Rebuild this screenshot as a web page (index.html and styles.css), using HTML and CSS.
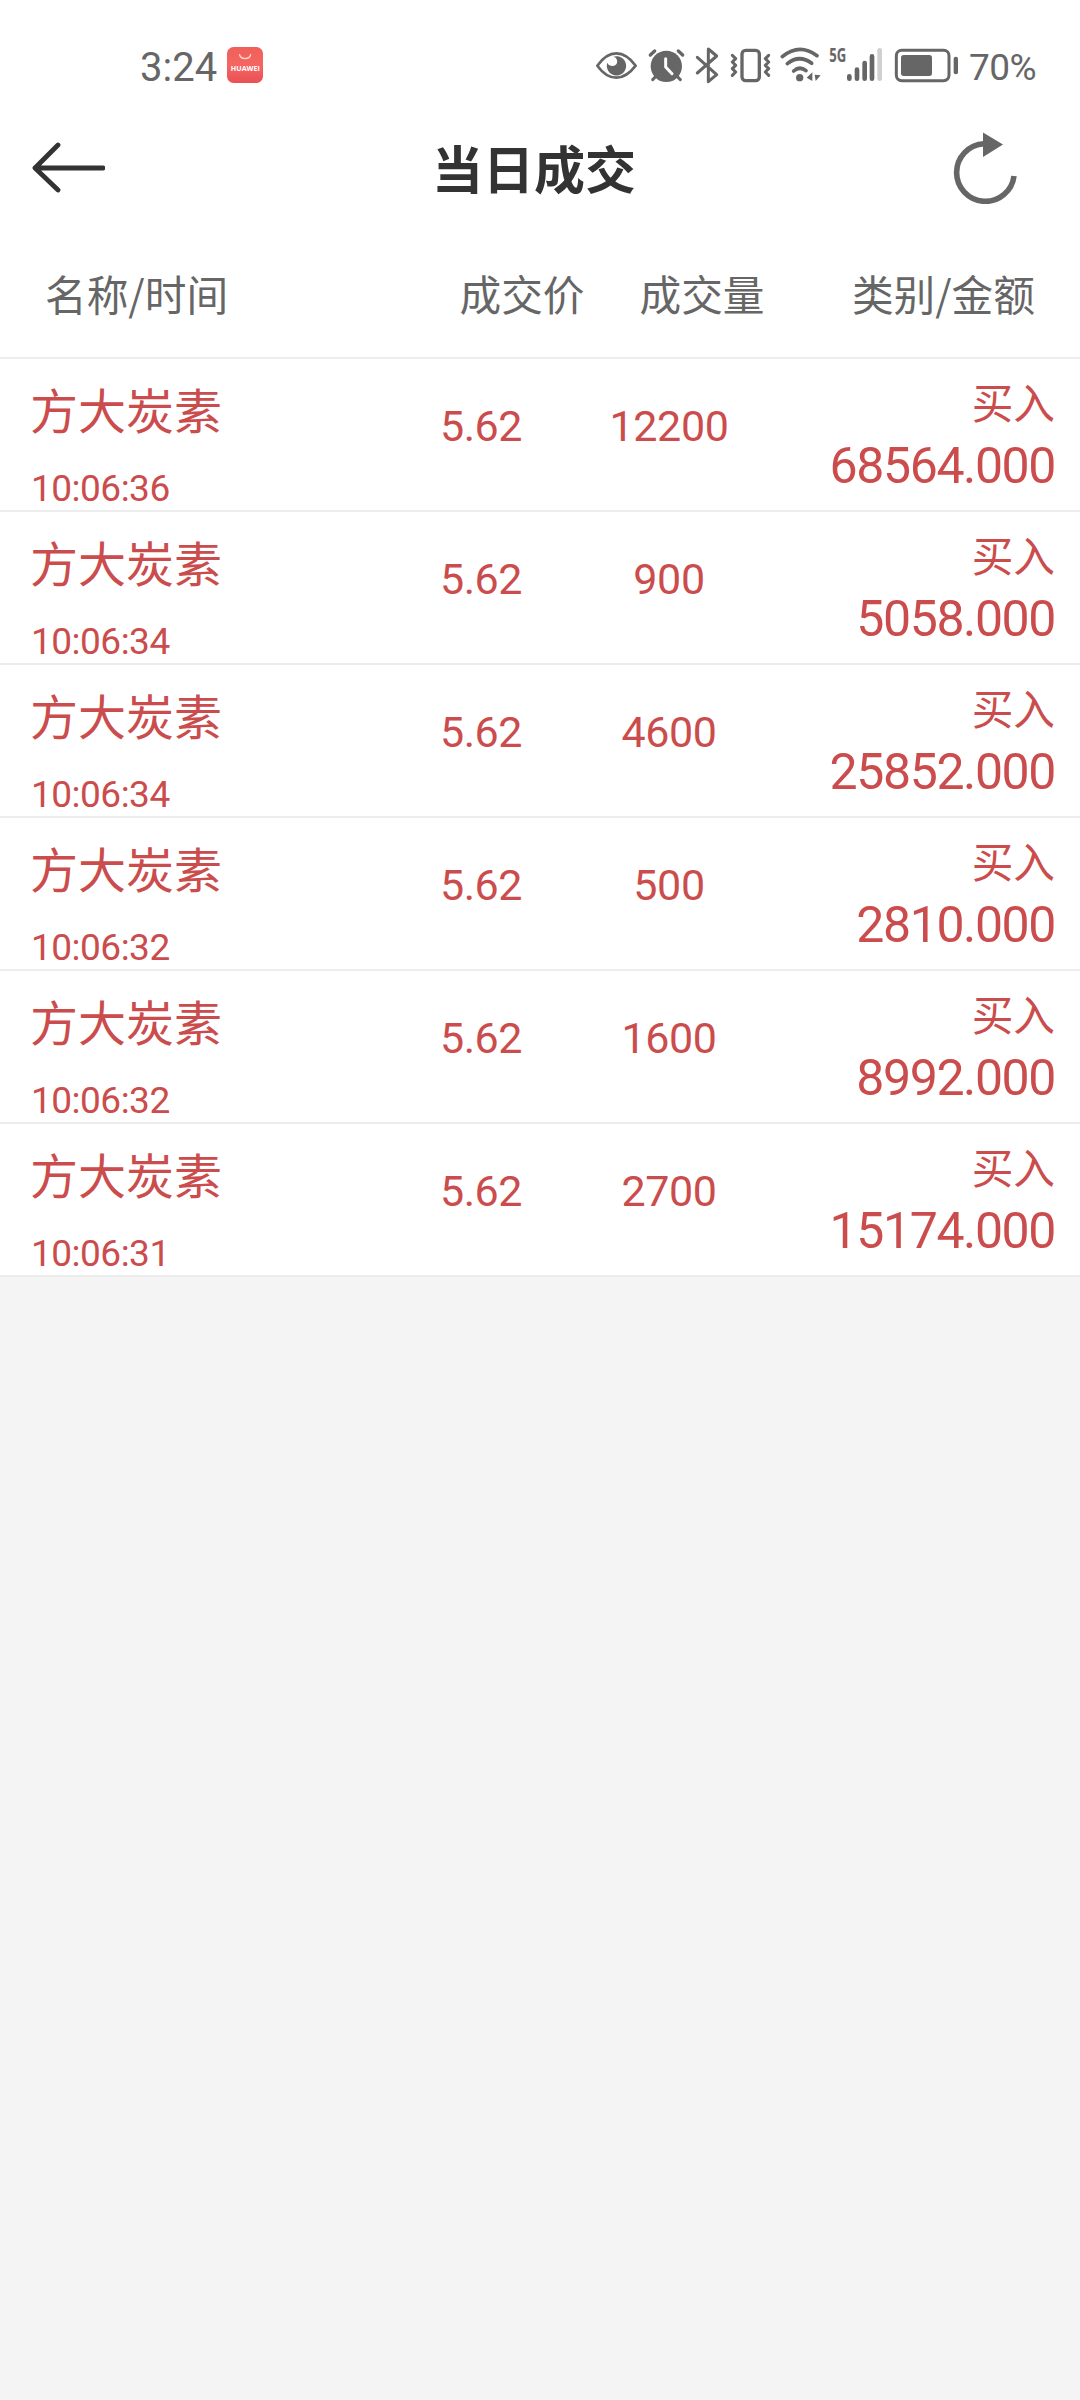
FILE: index.html
```html
<!DOCTYPE html>
<html lang="zh-CN">
<head>
    <meta charset="UTF-8">
    <meta name="viewport" content="width=device-width, initial-scale=1.0">
    <title>当日成交</title>
    <link rel="stylesheet" href="styles.css">
</head>
<body>
    <div class="status-bar">
        <span class="clock">3:24</span>
        <svg class="app-badge" width="36" height="36" viewBox="0 0 36 36">
            <defs>
                <linearGradient id="badge" x1="0" y1="0" x2="0" y2="1">
                    <stop offset="0" stop-color="#f0605a"/>
                    <stop offset="0.5" stop-color="#f56663"/>
                    <stop offset="1" stop-color="#ea5055"/>
                </linearGradient>
            </defs>
            <rect width="36" height="36" rx="6.5" fill="url(#badge)"/>
            <path d="M12.5 7.5a5.7 5 0 0 0 11.2 0" fill="none" stroke="#ffd9d2" stroke-width="1.2" stroke-linecap="round"/>
            <text x="3.8" y="24" textLength="29" lengthAdjust="spacingAndGlyphs" class="badge-text">HUAWEI</text>
        </svg>

        <div class="status-icons">
            <!-- eye comfort -->
            <svg width="43" height="40" viewBox="45 45 129 120">
                <path d="M52 107Q78 70 109 70T167 107Q140 143 109 143T52 107Z" fill="none" stroke="#666" stroke-width="8" stroke-linejoin="round"/>
                <path d="M100 80a29 29 0 1 1-18 18a15 15 0 0 0 20 9a14 14 0 0 0-2-27z" fill="#666"/>
            </svg>
            <!-- alarm -->
            <svg width="40" height="40" viewBox="198 45 120 120">
                <circle cx="259" cy="109" r="47" fill="#666"/>
                <path d="M211 75l13-12M308 75l-13-12" stroke="#666" stroke-width="10" stroke-linecap="round"/>
                <path d="M227 140l-9 9M292 140l9 9" stroke="#666" stroke-width="9" stroke-linecap="round"/>
                <path d="M257 86v25l19 20" fill="none" stroke="#fff" stroke-width="9" stroke-linecap="round" stroke-linejoin="round"/>
            </svg>
            <!-- bluetooth -->
            <svg width="26" height="40" viewBox="342 45 78 120">
                <path d="M352 82l58 52-25 21V57l25 21-58 51" fill="none" stroke="#666" stroke-width="9" stroke-linecap="round" stroke-linejoin="round"/>
            </svg>
            <!-- vibrate -->
            <svg width="44" height="40" viewBox="444 45 132 120">
                <rect x="486" y="61" width="52" height="91" rx="11" fill="none" stroke="#666" stroke-width="10"/>
                <path d="M457 76l10 10-10 10 10 10-10 10 10 10-10 10M566 76l-10 10 10 10-10 10 10 10-10 10 10 10" fill="none" stroke="#666" stroke-width="9" stroke-linecap="round" stroke-linejoin="round"/>
            </svg>
            <!-- wifi -->
            <svg width="41" height="40" viewBox="600 45 123 120">
                <g fill="none" stroke="#666" stroke-width="11" stroke-linecap="round">
                    <path d="M607 80Q658 38 711 77"/>
                    <path d="M622 101Q658 72 695 100"/>
                    <path d="M641 123Q659 107 678 122"/>
                </g>
                <circle cx="659" cy="143" r="11" fill="#666"/>
                <path d="M680 143l17-16v26zM704 134l18 2-15 17z" fill="#666"/>
            </svg>
            <!-- mobile signal -->
            <svg class="signal" width="55" height="40" viewBox="27 45 165 120">
                <text x="28" y="97" textLength="51" lengthAdjust="spacingAndGlyphs" class="network-text">5G</text>
                <g stroke="#666" stroke-width="14" stroke-linecap="round">
                    <path d="M88 139v7M111 119v27M134 99v47M156 79v67"/>
                    <path d="M179 61v85" stroke="#d0d0d0"/>
                </g>
            </svg>
            <!-- battery -->
            <svg width="67" height="40" viewBox="216 45 201 120">
                <rect x="229" y="61" width="158" height="91" rx="16" fill="none" stroke="#666" stroke-width="9"/>
                <rect x="243" y="75" width="93" height="63" rx="8" fill="#666"/>
                <rect x="401" y="80" width="13" height="53" rx="6" fill="#666"/>
            </svg>
            <span class="battery-level">70%</span>
        </div>
    </div>

    <div class="nav-bar">
        <svg class="back" width="74" height="52" viewBox="0 0 74 52">
            <path d="M27 3L4 26l23 22M4 26h68" fill="none" stroke="#333" stroke-width="4.8" stroke-linecap="round" stroke-linejoin="round"/>
        </svg>
        <h1>当日成交</h1>
        <svg class="refresh" width="68" height="72" viewBox="0 0 68 72">
            <path d="M33 11.8A28.8 28.8 0 1 0 63 44" fill="none" stroke="#666" stroke-width="5.6"/>
            <path d="M32 0.5l20 12L32 25z" fill="#666"/>
        </svg>
    </div>

    <div class="table-head">
        <span class="head-name">名称/时间</span>
        <span>成交价</span>
        <span>成交量</span>
        <span class="head-amount">类别/金额</span>
    </div>

    <div class="trades">
        <div class="trade">
            <div class="stock"><div class="name">方大炭素</div><div class="time">10:06:36</div></div>
            <div class="price">5.62</div>
            <div class="volume">12200</div>
            <div class="total"><div class="side">买入</div><div class="amount">68564.000</div></div>
        </div>
        <div class="trade">
            <div class="stock"><div class="name">方大炭素</div><div class="time">10:06:34</div></div>
            <div class="price">5.62</div>
            <div class="volume">900</div>
            <div class="total"><div class="side">买入</div><div class="amount">5058.000</div></div>
        </div>
        <div class="trade">
            <div class="stock"><div class="name">方大炭素</div><div class="time">10:06:34</div></div>
            <div class="price">5.62</div>
            <div class="volume">4600</div>
            <div class="total"><div class="side">买入</div><div class="amount">25852.000</div></div>
        </div>
        <div class="trade">
            <div class="stock"><div class="name">方大炭素</div><div class="time">10:06:32</div></div>
            <div class="price">5.62</div>
            <div class="volume">500</div>
            <div class="total"><div class="side">买入</div><div class="amount">2810.000</div></div>
        </div>
        <div class="trade">
            <div class="stock"><div class="name">方大炭素</div><div class="time">10:06:32</div></div>
            <div class="price">5.62</div>
            <div class="volume">1600</div>
            <div class="total"><div class="side">买入</div><div class="amount">8992.000</div></div>
        </div>
        <div class="trade">
            <div class="stock"><div class="name">方大炭素</div><div class="time">10:06:31</div></div>
            <div class="price">5.62</div>
            <div class="volume">2700</div>
            <div class="total"><div class="side">买入</div><div class="amount">15174.000</div></div>
        </div>
    </div>
</body>
</html>
```

FILE: styles.css
```css
* {
    box-sizing: border-box;
}

body {
    margin: 0;
    min-height: 2400px;
    background: #f4f4f4;
    font-family: Roboto, "Noto Sans CJK SC", sans-serif;
    color: #666;
}

.status-bar {
    display: flex;
    align-items: center;
    height: 130px;
    padding: 0 42px 0 140px;
    background: #fff;
}

.clock {
    width: 87px;
    font-size: 40px;
    line-height: 40px;
    padding-top: 5px;
}

.badge-text {
    font: bold 6.5px "Open Sans", sans-serif;
    fill: #fff;
}

.status-icons {
    display: flex;
    align-items: center;
    gap: 8px;
    margin-left: auto;
}

.signal {
    overflow: visible;
}

.network-text {
    font: bold 60px "Open Sans", sans-serif;
    fill: #666;
}

.battery-level {
    width: 71px;
    padding: 5px 0 0 2px;
    font-size: 37px;
    letter-spacing: -0.5px;
    line-height: 40px;
    white-space: nowrap;
}

.nav-bar {
    display: flex;
    justify-content: space-between;
    align-items: center;
    height: 110px;
    padding: 0 61px 35px 31px;
    background: #fff;
}

.nav-bar h1 {
    margin: 0;
    padding: 8px 0 0 12px;
    font-size: 51px;
    line-height: 75px;
    font-weight: bold;
    color: #333;
}

.table-head {
    display: grid;
    grid-template-columns: 432px 180px 180px 1fr;
    align-items: center;
    height: 119px;
    padding-bottom: 12px;
    border-bottom: 2px solid #ededed;
    background: #fff;
    font-family: "Noto Sans CJK SC", sans-serif;
    font-size: 41.7px;
    line-height: 60px;
    text-align: center;
}

.head-name {
    padding-left: 45px;
    text-align: left;
}

.head-amount {
    padding-right: 45px;
    text-align: right;
}

.trade {
    display: grid;
    grid-template-columns: 391px 180px 198px 1fr;
    height: 153px;
    border-bottom: 2px solid #ededed;
    background: #fff;
    color: #cb4c4c;
}

.stock {
    padding: 24px 0 0 30px;
}

.name {
    font-size: 48px;
    line-height: 60px;
}

.time {
    margin-top: 21px;
    padding-left: 1px;
    font-size: 37px;
    line-height: 50px;
    letter-spacing: -0.5px;
}

.price,
.volume {
    padding-top: 37px;
    font-size: 43px;
    line-height: 60px;
    letter-spacing: -0.4px;
    text-align: center;
}

.volume {
    padding-right: 2px;
}

.total {
    padding: 16px 25px 0 0;
    text-align: right;
}

.side {
    font-size: 41.7px;
    line-height: 60px;
}

.amount {
    padding-top: 1px;
    font-size: 50px;
    line-height: 60px;
    letter-spacing: -1.4px;
}
```
